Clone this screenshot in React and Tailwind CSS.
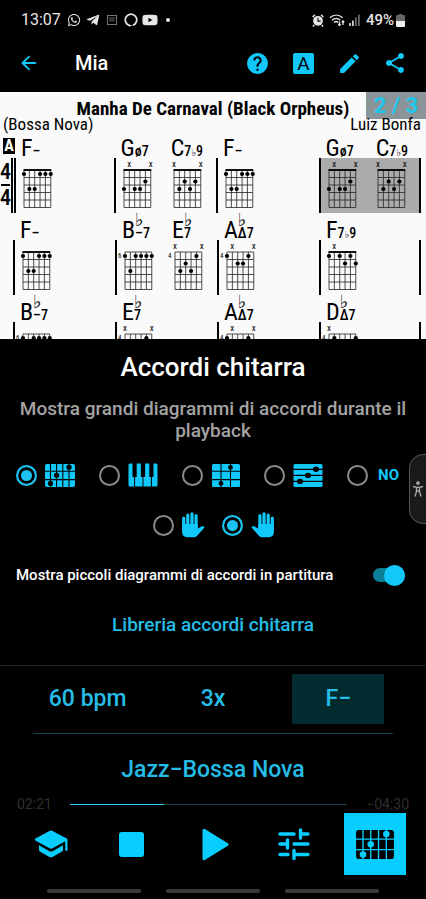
import { ArrowLeft } from "lucide-react";
import { MdHelp, MdModeEdit, MdShare } from "react-icons/md";
import { FaWhatsapp, FaTelegramPlane, FaYoutube } from "react-icons/fa";

const SHAPES = {
  Fm: { nut: true, mutes: [], dots: [[0, 1], [3, 1], [4, 1], [5, 1], [1, 3], [2, 3]] },
  G: { nut: true, mutes: [1, 5], dots: [[4, 2], [0, 3], [2, 3], [3, 3]] },
  C: { nut: true, mutes: [0, 5], dots: [[2, 2], [4, 2], [1, 3], [3, 3]] },
  Bb: { fret: 6, mutes: [], dots: [[0, 1], [2, 1], [3, 1], [4, 1], [5, 1], [1, 3]] },
  Eb: { fret: 4, mutes: [0, 5], dots: [[4, 1], [2, 2], [1, 3], [3, 3]] },
  Ab: { fret: 4, mutes: [1, 5], dots: [[0, 1], [4, 1], [2, 2], [3, 2]] },
  F7: { nut: true, mutes: [1], dots: [[0, 1], [2, 1], [4, 1], [3, 2], [5, 2]] },
  Db: { fret: 4, mutes: [0], dots: [[1, 1], [5, 1], [2, 2], [4, 2]] },
};

const Fm = { root: "F", suffix: "–", shape: "Fm" };
const G = { root: "G", suffix: "ø7", shape: "G" };
const C = { root: "C", suffix: "7♭9", shape: "C" };
const Bb = { root: "B", flat: true, suffix: "–7", shape: "Bb" };
const Eb = { root: "E", flat: true, suffix: "7", shape: "Eb" };
const Ab = { root: "A", flat: true, suffix: "Δ7", shape: "Ab" };
const F7 = { root: "F", suffix: "7♭9", shape: "F7" };
const Db = { root: "D", flat: true, suffix: "Δ7", shape: "Db" };

const ROWS = [
  [[Fm], [G, C], [Fm], [G, C]],
  [[Fm], [Bb, Eb], [Ab], [F7]],
  [[Bb], [Eb], [Ab], [Db]],
];

function Diagram({ shape }) {
  const { nut, fret, mutes, dots } = SHAPES[shape];
  const x = (s) => 8 + s * 5.35;
  const y = (f) => 12 + f * 7.5;
  return (
    <svg width="40" height="52" viewBox="0 0 40 52" className="block shrink-0" aria-hidden="true">
      {[0, 1, 2, 3, 4, 5].map((s) => (
        <line key={s} x1={x(s)} x2={x(s)} y1={y(0)} y2={y(5)} stroke="#222" strokeWidth="0.8" />
      ))}
      {[0, 1, 2, 3, 4, 5].map((f) => (
        <line key={f} x1={x(0)} x2={x(5)} y1={y(f)} y2={y(f)} stroke="#222" strokeWidth="0.8" />
      ))}
      {nut && <line x1={x(0) - 0.5} x2={x(5) + 0.5} y1="12" y2="12" stroke="#000" strokeWidth="1.8" />}
      {dots.map(([s, f]) => (
        <circle key={`${s}-${f}`} cx={x(s)} cy={y(f) - 3.5} r="2.1" fill="#000" />
      ))}
      {mutes.map((s) => (
        <text key={s} x={x(s)} y="9" textAnchor="middle" fontSize="9" fill="#000">x</text>
      ))}
      {fret && <text x="1" y="18" fontSize="7" fill="#000">{fret}</text>}
    </svg>
  );
}

function ChordName({ chord }) {
  return (
    <div className="flex h-[27px] items-end pl-[5px]">
      <span className="text-[24px] leading-[20px] font-normal">{chord.root}</span>
      <span className="flex flex-col text-[14px] leading-[13px] font-medium">
        {chord.flat && <span className="font-['DejaVu_Sans'] text-[18px] leading-[14px] font-normal">♭</span>}
        <span className="whitespace-nowrap">
          {chord.suffix.split("♭").map((part, i) => (
            <span key={i}>
              {i > 0 && <span className="font-['DejaVu_Sans'] text-[10px] leading-none font-normal">♭</span>}
              {part}
            </span>
          ))}
        </span>
      </span>
    </div>
  );
}

function Measure({ chords, first, last, active }) {
  const left = first ? "border-l-[5px] border-double" : "border-l-2";
  return (
    <div className="min-w-0 flex-1">
      <div className={`flex ${first ? "pl-[5px]" : "pl-[2px]"}`}>
        {chords.map((c, i) => (
          <div key={i} className="w-[51px]"><ChordName chord={c} /></div>
        ))}
      </div>
      <div className={`flex h-[55px] border-black ${left} ${last ? "border-r-2" : ""} ${active ? "bg-[#ababab]" : ""}`}>
        {chords.map((c, i) => (
          <div key={i} className="w-[51px]"><Diagram shape={c.shape} /></div>
        ))}
      </div>
    </div>
  );
}

function Score() {
  return (
    <section className="relative h-[247px] overflow-hidden bg-[#fafafa] font-['Roboto_Condensed',Roboto,sans-serif] text-black">
      <div className="absolute top-0 right-0 flex h-[27px] w-[60px] items-center justify-center bg-[#8a9499] font-['Roboto',sans-serif] text-[22px] font-bold text-[#1cc8ee]">
        2 / 3
      </div>
      <div className="relative">
        <h2 className="pt-[7px] text-center text-[19px] leading-[20px] font-bold">Manha De Carnaval (Black Orpheus)</h2>
        <div className="-mt-[2px] flex h-[14px] items-center justify-between pr-[5px] pl-[3px] text-[17px] leading-[14px]">
          <span>(Bossa Nova)</span>
          <span>Luiz Bonfa</span>
        </div>
        {ROWS.map((row, r) => (
          <div key={r} className="flex pr-[5px]">
            <div className={r === 0 ? "w-[11px] shrink-0" : "w-[13px] shrink-0"}>
              {r === 0 && (
                <>
                  <div className="mt-[7px] ml-[3px] flex h-[16px] w-[12px] items-center justify-center bg-black text-[16px] font-bold text-white">A</div>
                  <div className="mt-[6px] flex flex-col items-center text-[22px] leading-[24px] font-medium">
                    <span>4</span>
                    <span className="h-[2px] w-[9px] bg-black" />
                    <span>4</span>
                  </div>
                </>
              )}
            </div>
            {row.map((chords, m) => (
              <Measure key={m} chords={chords} first={r === 0 && m === 0} last={m === 3} active={r === 0 && m === 3} />
            ))}
          </div>
        ))}
      </div>
    </section>
  );
}

function FretboardIcon({ width, height, gap }) {
  return (
    <svg width={width} height={height} viewBox="0 0 30 23" aria-hidden="true">
      <rect width="30" height="23" rx="2" fill="currentColor" />
      <path d="M5.5 0v23M11.6 0v23M17.8 0v23M24 0v23M0 7.2h30M0 15.6h30" stroke={gap} strokeWidth="1.1" />
      <circle cx="24" cy="3.2" r="2.6" fill={gap} />
      <circle cx="11.6" cy="11.3" r="2.6" fill={gap} />
      <circle cx="5.5" cy="19.4" r="2.6" fill={gap} />
    </svg>
  );
}

function PianoIcon() {
  return (
    <svg width="30" height="24" viewBox="0 0 30 24" aria-hidden="true">
      <rect x="0.5" y="0.5" width="29" height="23" rx="1.5" fill="currentColor" />
      <path d="M4.500 0h4.200v14H4.500zM12.900 0h4.200v14h-4.200zM21.300 0h4.200v14h-4.200z" fill="#000" />
      <path d="M6.600 13v11M15 13v11M23.400 13v11" stroke="#000" strokeWidth="1" />
    </svg>
  );
}

function UkuleleIcon() {
  return (
    <svg width="30" height="23" viewBox="0 0 30 23" aria-hidden="true">
      <rect x="1" width="28" height="23" rx="1.5" fill="currentColor" />
      <path d="M10 0v23M19.5 0v23M1 7.2h28M1 15.6h28" stroke="#000" strokeWidth="1.1" />
      <circle cx="19.5" cy="3.4" r="2.4" fill="#000" />
      <circle cx="10" cy="19.4" r="2.4" fill="#000" />
    </svg>
  );
}

function BassIcon() {
  return (
    <svg width="30" height="23" viewBox="0 0 30 23" aria-hidden="true">
      <rect x="0.5" width="29" height="23" rx="1.5" fill="currentColor" />
      <path d="M0 5.3h30M0 11.4h30M0 17.4h30" stroke="#000" strokeWidth="1.2" />
      <ellipse cx="23" cy="5.3" rx="3.1" ry="2.7" />
      <ellipse cx="15" cy="11.4" rx="3.1" ry="2.7" />
      <ellipse cx="7" cy="17.4" rx="3.1" ry="2.7" />
    </svg>
  );
}

function HandIcon({ flip }) {
  return (
    <svg width="23" height="26" viewBox="0 0 23 26" className={flip ? "-scale-x-100" : ""} fill="none" stroke="currentColor" strokeLinecap="round" aria-hidden="true">
      <path d="M1.700 6v10M5.800 3V16M10 1.800V16M14.100 3.700V16" strokeWidth="3.200" />
      <path d="M.1 12H15.700V16.500L20 14.300Q22.800 13.600 22.300 15.700L15 24Q14 25.200 12 25.200H5Q.1 25 .1 20Z" fill="currentColor" stroke="none" />
    </svg>
  );
}

function Radio({ name, label, checked, children }) {
  return (
    <label className="flex items-center gap-2">
      <input
        type="radio"
        name={name}
        aria-label={label}
        defaultChecked={checked}
        className="m-0 size-[21px] shrink-0 appearance-none rounded-full border-2 border-[#8a8a8a] bg-black checked:border-[#1cc3f2] checked:bg-[#1cc3f2] checked:shadow-[inset_0_0_0_3px_#000]"
      />
      {children}
    </label>
  );
}

function StatusBar() {
  return (
    <div className="flex h-[40px] items-center px-[21px] text-[#e6e6e6]">
      <span className="text-[16px]">13:07</span>
      <FaWhatsapp className="ml-[6px] size-[14px]" />
      <FaTelegramPlane className="ml-[5px] size-[14px]" />
      <span className="ml-[7px] flex size-[10px] items-center justify-center border border-[#777] text-[7px] text-[#777]">W</span>
      <svg width="14" height="14" viewBox="0 0 14 14" className="ml-[7px]" aria-hidden="true">
        <path d="M5.200 12.300A5.700 5.700 0 1 1 8.800 12.300" fill="none" stroke="currentColor" strokeWidth="1.700" />
        <path d="M4 11.500l4.500.8-3.200 1.500z" fill="currentColor" />
      </svg>
      <FaYoutube className="ml-[4px] size-[16px]" />
      <span className="ml-[8px] size-[4px] rounded-full bg-current" />
      <span className="flex-1" />
      <svg width="12" height="13" viewBox="0 0 12 13" aria-hidden="true">
        <circle cx="6" cy="6.800" r="4.900" fill="currentColor" />
        <path d="M.6 3L3 .8M11.400 3L9 .8M2.300 11L1 12.500M9.700 11L11 12.500" stroke="currentColor" strokeWidth="1.500" />
        <path d="M6 3.800v3.300h2.600" fill="none" stroke="#000" strokeWidth="1.100" />
      </svg>
      <svg width="16" height="12" viewBox="0 0 16 12" className="ml-[5px]" fill="none" stroke="currentColor" strokeWidth="1.300" aria-hidden="true">
        <path d="M.8 3.800c4-3.600 9-3.600 12.800 0M3 6.200c2.600-2.300 5.800-2.300 8.400 0M5 8.400c1.400-1.200 2.800-1.200 4.200 0M10.500 7.500v4M9.300 10.200l1.200 1.300 1.200-1.300M14 11V7M12.800 8.300L14 7l1.200 1.300" />
      </svg>
      <svg width="11" height="12" viewBox="0 0 11 12" className="ml-[4px]" aria-hidden="true">
        <path d="M0 9h1.800v3H0zM3 6.500h1.800V12H3z" fill="#ccc" />
        <path d="M6 3.500h1.800V12H6zM9 .5h1.800V12H9z" fill="#666" />
      </svg>
      <span className="ml-[6px] text-[15px] font-medium">49%</span>
      <svg width="9" height="13" viewBox="0 0 9 13" className="ml-[2px]" aria-hidden="true">
        <path d="M3 0h3v1h2q1 0 1 1v5H0V2q0-1 1-1h2z" fill="#666" />
        <path d="M0 7h9v5q0 1-1 1H1q-1 0-1-1z" fill="#eee" />
      </svg>
    </div>
  );
}

function AppBar() {
  return (
    <header className="flex h-[52px] items-center pr-[19px] pb-[6px] pl-[18px] text-[#12c8fa]">
      <button type="button" aria-label="Indietro" className="w-[57px]"><ArrowLeft size={22} strokeWidth={2} /></button>
      <h1 className="flex-1 text-[20px] leading-6 font-medium text-white">Mia</h1>
      <div className="flex items-center gap-[21px]">
        <button type="button" aria-label="Aiuto"><MdHelp size={25} /></button>
        <button type="button" aria-label="Carattere" className="flex size-[25px] items-center justify-center">
          <span className="flex size-[21px] items-center justify-center rounded-[2px] bg-[#12c8fa] text-[19px] leading-none text-black">A</span>
        </button>
        <button type="button" aria-label="Modifica"><MdModeEdit size={25} /></button>
        <button type="button" aria-label="Condividi"><MdShare size={24} /></button>
      </div>
    </header>
  );
}

function ChordSettings() {
  return (
    <section className="flex flex-col">
      <h2 className="mt-[12px] text-center text-[26px] leading-[32px] font-medium text-white">Accordi chitarra</h2>
      <p className="mt-[15px] px-[18px] text-center text-[19px] leading-[22px] font-medium text-[#a3a3a3]">
        Mostra grandi diagrammi di accordi durante il playback
      </p>
      <div className="mt-[19px] flex h-[28px] items-center justify-between pr-[27px] pl-[16px] text-[#12c8fa]">
        <Radio name="view" label="Chitarra" checked><FretboardIcon width={30} height={23} gap="#000" /></Radio>
        <Radio name="view" label="Piano"><PianoIcon /></Radio>
        <Radio name="view" label="Ukulele"><UkuleleIcon /></Radio>
        <Radio name="view" label="Basso"><BassIcon /></Radio>
        <Radio name="view"><span className="pl-[2px] text-[15px] font-bold">NO</span></Radio>
      </div>
      <div className="mt-[22px] flex h-[28px] items-center justify-center gap-[17px] text-[#12c8fa]">
        <Radio name="hand" label="Mano sinistra"><HandIcon /></Radio>
        <Radio name="hand" label="Mano destra" checked><HandIcon flip /></Radio>
      </div>
      <label className="mt-[26px] flex h-[20px] items-center justify-between pr-[21px] pl-[16px] text-[15px] font-medium text-white">
        Mostra piccoli diagrammi di accordi in partitura
        <input
          type="checkbox"
          role="switch"
          defaultChecked
          className="flex h-[14px] w-[32px] appearance-none items-center justify-end rounded-full bg-[#0b7f98] before:size-[21px] before:shrink-0 before:rounded-full before:bg-[#12c8fa]"
        />
      </label>
      <a href="#libreria" className="mt-[28px] self-center text-[19px] leading-6 font-medium text-[#25bce6]">Libreria accordi chitarra</a>
    </section>
  );
}

function Player() {
  return (
    <footer className="mt-[28px] border-t border-[#202020] text-[#25bce6]">
      <div className="mt-[8px] grid grid-cols-3 justify-items-center px-[25px] text-[23px] font-medium">
        <button type="button" className="h-[50px] w-[92px]">60 bpm</button>
        <button type="button" className="h-[50px] w-[92px]">3x</button>
        <button type="button" className="h-[50px] w-[92px] bg-[#022b30]">F−</button>
      </div>
      <div className="mx-[33px] mt-[9px] h-px bg-[#0e4450]" />
      <button type="button" className="mt-[20px] block w-full text-center text-[23px] leading-8 font-medium">Jazz−Bossa Nova</button>
      <div className="mt-[9px] flex h-[18px] items-center px-[17px] text-[14px] text-[#303030]">
        <span className="w-[53px]">02:21</span>
        <input
          type="range"
          aria-label="Posizione"
          min="0"
          max="411"
          defaultValue="141"
          className="h-[1px] min-w-0 flex-1 appearance-none bg-[linear-gradient(to_right,#35c8e8_34%,#12424d_34%)] [&::-webkit-slider-thumb]:size-0 [&::-webkit-slider-thumb]:appearance-none"
        />
        <span className="w-[62px] text-right">−04:30</span>
      </div>
      <nav className="grid h-[62px] grid-cols-5 items-center justify-items-center px-[10px] text-[#08ceff]">
        <button type="button" aria-label="Esercizio">
          <svg width="36" height="36" viewBox="0 0 24 24" fill="currentColor" aria-hidden="true">
            <path d="M4 12.800V16q0 .6.600 1l6.400 3.600q1 .5 2 0l6.400-3.600q.6-.4.600-1v-3.200l-7 4q-1 .5-2 0zM11 3.300L1.600 8.400q-.9.600 0 1.200L11 14.900q1 .5 2 0l8.500-4.800V16q0 .7.750.7t.75-.7V9.200q0-.5-.5-.8L13 3.300q-1-.5-2 0z" />
          </svg>
        </button>
        <button type="button" aria-label="Stop" className="size-[25px] rounded-[3px] bg-[#08ceff]" />
        <button type="button" aria-label="Riproduci" className="pl-[5px]">
          <svg width="27" height="33" viewBox="0 0 27 33" aria-hidden="true">
            <path d="M2 2.200l23 14.300L2 30.800z" fill="currentColor" stroke="currentColor" strokeWidth="3" strokeLinejoin="round" />
          </svg>
        </button>
        <button type="button" aria-label="Mixer">
          <svg width="32" height="32" viewBox="0 0 32 32" fill="none" stroke="currentColor" strokeWidth="3.400" strokeLinecap="round" aria-hidden="true">
            <path d="M2 6h14M23 6h7M22.500 2v8M2 16h7M9.500 12v8M16 16h14M2 26.500h8M16 22.500v8M16 26.500h14" />
          </svg>
        </button>
        <button type="button" aria-label="Accordi" className="flex size-[62px] items-center justify-center bg-[#08ceff] text-black">
          <FretboardIcon width={38} height={29} gap="#08ceff" />
        </button>
      </nav>
      <div className="mt-[14px] mb-[6px] flex justify-center gap-[25px]">
        <span className="h-[4px] w-[94px] rounded-full bg-[#3a3a3a]" />
        <span className="h-[4px] w-[94px] rounded-full bg-[#3a3a3a]" />
        <span className="h-[4px] w-[94px] rounded-full bg-[#3a3a3a]" />
      </div>
    </footer>
  );
}

export default function App() {
  return (
    <div className="relative min-h-screen overflow-hidden bg-black font-['Roboto',sans-serif]">
      <StatusBar />
      <AppBar />
      <Score />
      <ChordSettings />
      <Player />
      <button type="button" aria-label="Accessibilità" className="absolute top-[454px] -right-[4px] flex h-[70px] w-[21px] items-center justify-start rounded-l-[14px] border border-[#555] bg-[#1a1a1a] text-[#aaa]">
        <svg width="16" height="18" viewBox="0 0 16 18" fill="none" stroke="currentColor" strokeWidth="1.300" aria-hidden="true">
          <circle cx="8" cy="3" r="1.200" fill="currentColor" />
          <path d="M3 6.500l3.500.8h3l3.500-.8M6.500 7.300v4L5 16.500M9.500 7.300v4l1.500 5.200M6.500 11h3" />
        </svg>
      </button>
    </div>
  );
}
